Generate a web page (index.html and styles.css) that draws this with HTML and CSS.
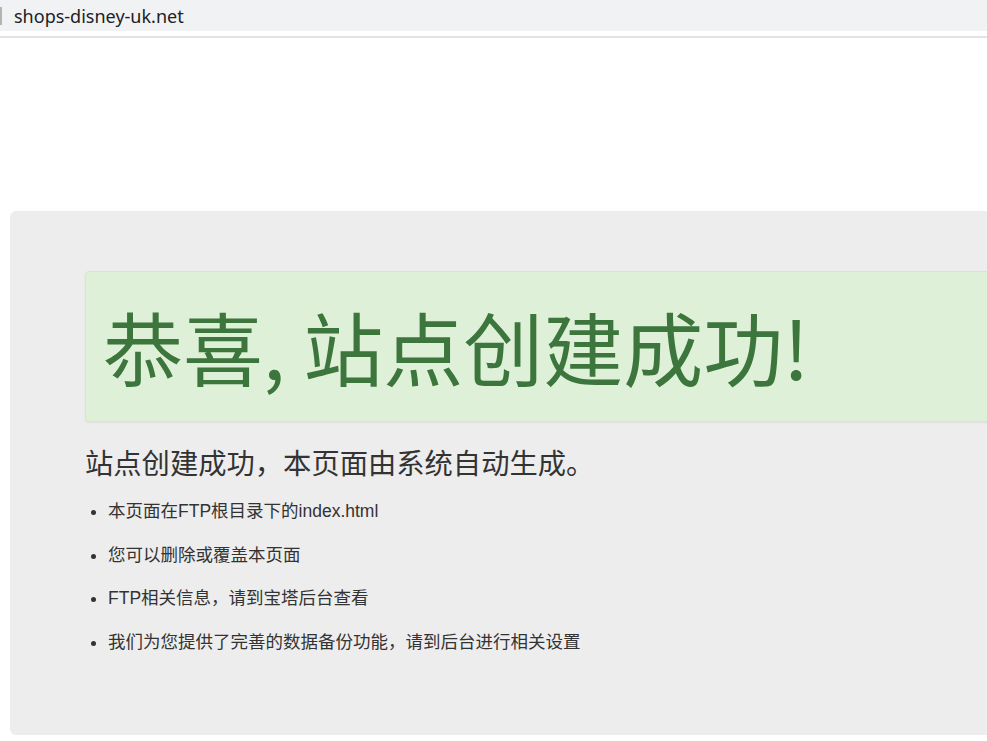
FILE: index.html
```html
<!DOCTYPE html>
<html lang="zh-CN">
<head>
  <meta charset="UTF-8">
  <title>恭喜，站点创建成功！</title>
  <link rel="stylesheet" href="styles.css">
</head>
<body>
  <div id="topFrame">
    <div id="addressBar">
      <span class="barEdge"></span>
      <span class="hostName">shops-disney-uk.net</span>
    </div>
  </div>
  <div id="page">
    <div class="jumbotron">
      <div class="alert-success">
        <h1>恭喜, 站点创建成功!</h1>
      </div>
      <h3>站点创建成功，本页面由系统自动生成。</h3>
      <ul>
        <li>本页面在FTP根目录下的index.html</li>
        <li>您可以删除或覆盖本页面</li>
        <li>FTP相关信息，请到宝塔后台查看</li>
        <li>我们为您提供了完善的数据备份功能，请到后台进行相关设置</li>
      </ul>
    </div>
  </div>
</body>
</html>
```

FILE: styles.css
```css
html, body {
  margin: 0;
  height: 100%;
  overflow: hidden;
}
body {
  background: #fff;
  color: #333;
  font-family: "Liberation Sans", "Noto Sans CJK SC", sans-serif;
}
#topFrame {
  padding-bottom: 5px;
  border-bottom: 2px solid #e3e3e5;
}
#addressBar {
  height: 31px;
  background: #f1f2f4;
  display: flex;
  align-items: center;
}
.barEdge {
  width: 2px;
  height: 18px;
  background: #b4b4b4;
  margin-right: 12px;
}
.hostName {
  font-family: "Noto Sans", "Liberation Sans", sans-serif;
  font-size: 18px;
  color: #202124;
}
#page {
  padding: 173px 0 0 10px;
}
.jumbotron {
  width: 1100px;
  height: 524px;
  box-sizing: border-box;
  background: #ededed;
  border-radius: 6px;
  padding: 60px 0 0 75px;
}
.alert-success {
  background: #dff0d8;
  border: 1px solid #d6e9c6;
  border-radius: 4px;
  padding: 29px 17px 32px;
  box-shadow: 0 1px 2px rgba(0,0,0,0.06);
}
.alert-success h1 {
  margin: 0;
  font-family: "Noto Sans CJK SC", sans-serif;
  font-weight: normal;
  font-size: 80px;
  line-height: 88px;
  color: #3c763d;
}
.jumbotron h3 {
  margin: 24px 0 0;
  font-family: "Noto Sans CJK SC", sans-serif;
  font-weight: normal;
  font-size: 28.3px;
  line-height: 31px;
  color: #333;
}
.jumbotron ul {
  margin: 22px 0 0;
  padding-left: 23px;
}
.jumbotron li {
  font-size: 17.5px;
  line-height: 24px;
  margin-bottom: 19.5px;
}
```
